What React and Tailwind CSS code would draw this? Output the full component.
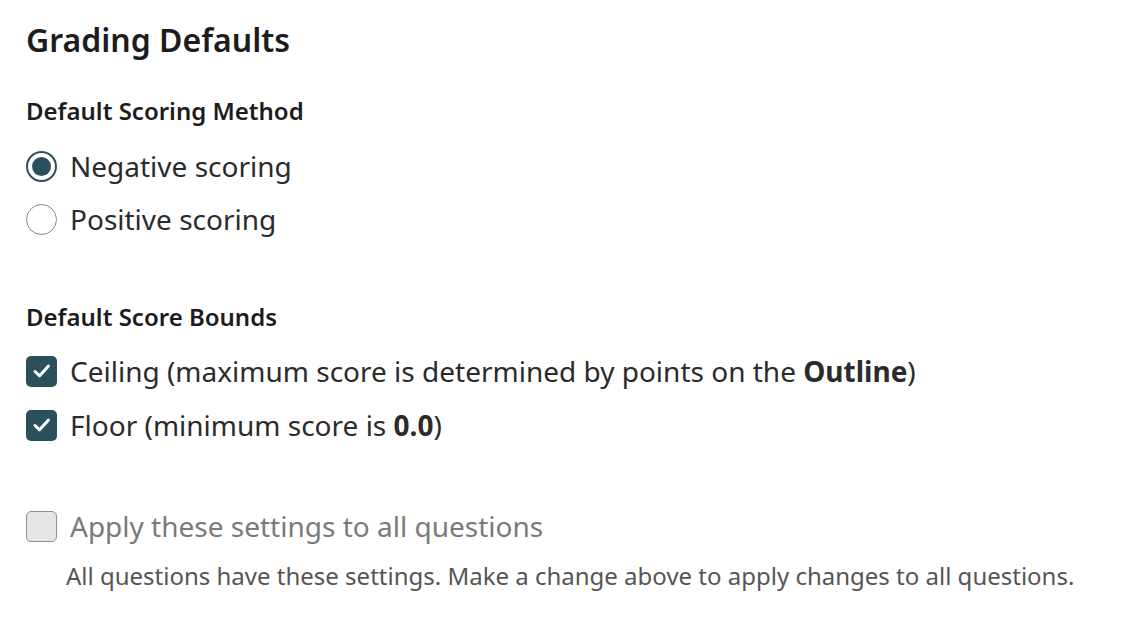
import React from "react";

const font = { fontFamily: '"Noto Sans", "Open Sans", sans-serif' };

function Radio({ checked }) {
  return checked ? (
    <span className="flex h-[31px] w-[31px] shrink-0 items-center justify-center rounded-full border-[2px] border-[#2a505b] bg-white">
      <span className="h-[19px] w-[19px] rounded-full bg-[#2a505b]" />
    </span>
  ) : (
    <span className="h-[31px] w-[31px] shrink-0 rounded-full border-[1.5px] border-[#8a8a8a] bg-white" />
  );
}

function Check({ checked, disabled }) {
  if (disabled) {
    return <span className="h-[31px] w-[31px] shrink-0 rounded-[5px] border-[1.5px] border-[#8f8f8f] bg-[#e6e6e6]" />;
  }
  return (
    <span className="flex h-[31px] w-[31px] shrink-0 items-center justify-center rounded-[5px] bg-[#2a505b]">
      <svg width="22" height="22" viewBox="0 0 22 22" fill="none">
        <path d="M4 11.5 L8.6 15.8 L17.5 6" stroke="white" strokeWidth="3" strokeLinecap="round" strokeLinejoin="round" />
      </svg>
    </span>
  );
}

const row = "flex h-[32px] items-center gap-[13px] text-[28px] leading-[32px]";

export default function App() {
  return (
    <div className="h-[628px] w-[1136px] bg-white pl-[26px] pt-[20px] text-[#2b2b2b]" style={font}>
      <h1 className="text-[32px] font-semibold leading-[40px] text-[#1c1c1c]">Grading Defaults</h1>

      <div className="mt-[35px] text-[24px] font-semibold leading-[32px] text-[#1c1c1c]">Default Scoring Method</div>
      <div className={`mt-[23px] ${row}`}>
        <Radio checked />
        <span>Negative scoring</span>
      </div>
      <div className={`mt-[21px] ${row}`}>
        <Radio />
        <span>Positive scoring</span>
      </div>

      <div className="mt-[66px] text-[24px] font-semibold leading-[32px] text-[#1c1c1c]">Default Score Bounds</div>
      <div className={`mt-[22px] ${row}`}>
        <Check checked />
        <span>
          Ceiling (maximum score is determined by points on the <b className="font-bold">Outline</b>)
        </span>
      </div>
      <div className={`mt-[22px] ${row}`}>
        <Check checked />
        <span>
          Floor (minimum score is <b className="font-bold">0.0</b>)
        </span>
      </div>

      <div className={`mt-[69px] ${row} text-[#7a7a7a]`}>
        <Check disabled />
        <span>Apply these settings to all questions</span>
      </div>
      <div className="ml-[40px] mt-[18px] text-[24px] leading-[32px] text-[#555]">
        All questions have these settings. Make a change above to apply changes to all questions.
      </div>
    </div>
  );
}
